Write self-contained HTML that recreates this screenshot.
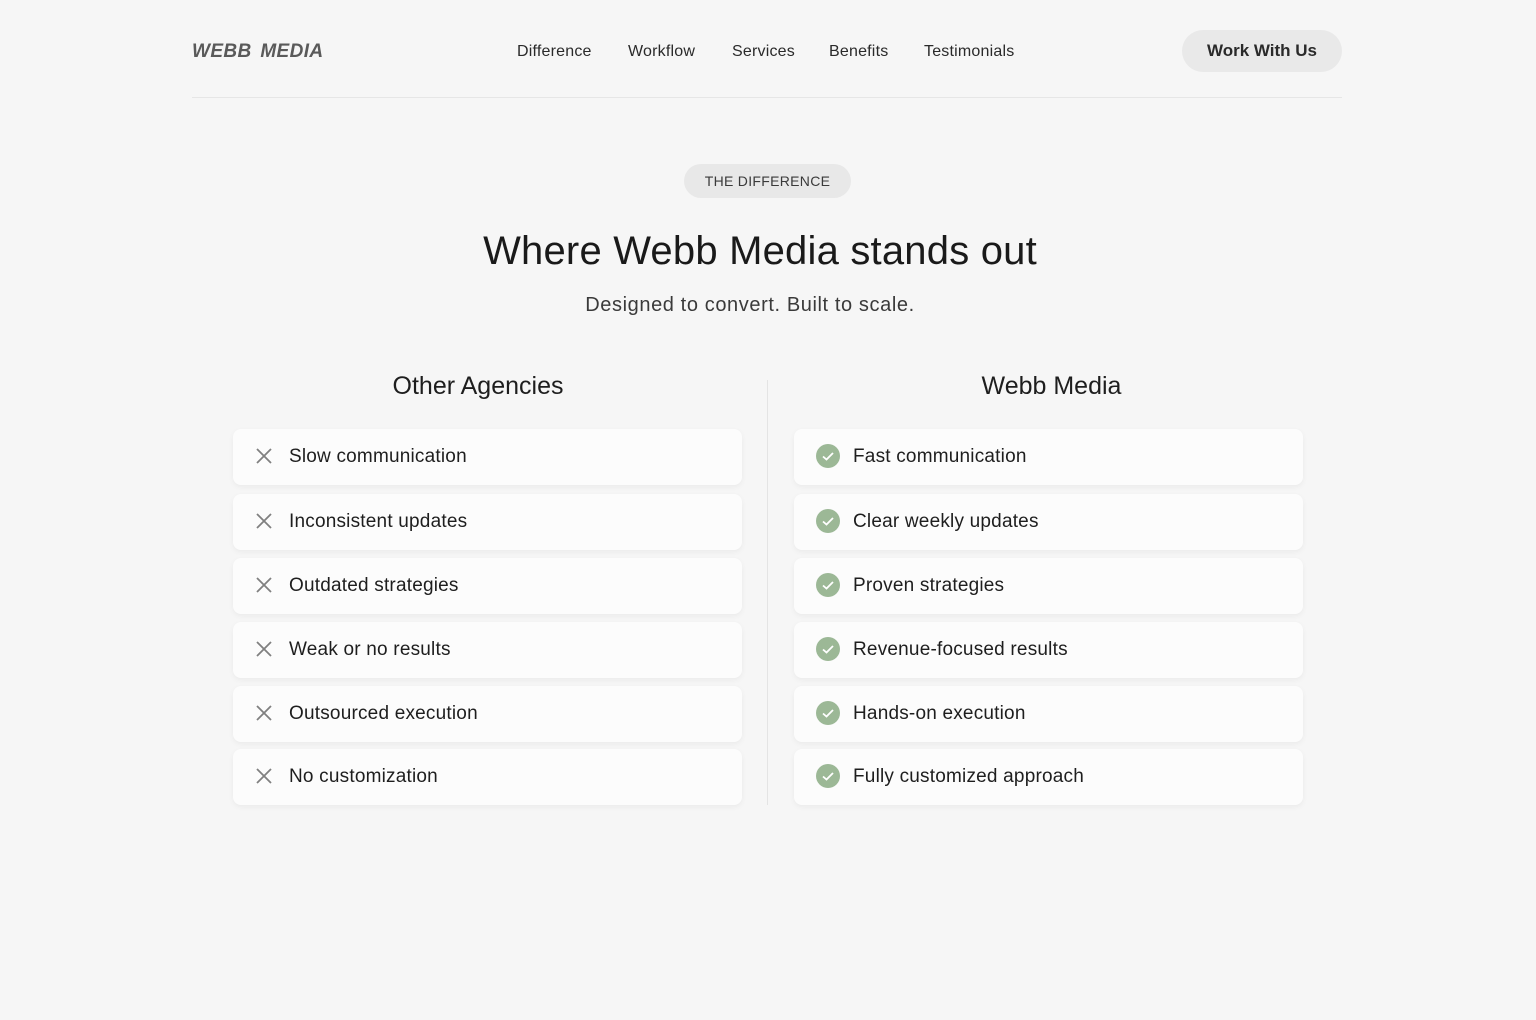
<!DOCTYPE html>
<html><head><meta charset="utf-8"><style>
*{margin:0;padding:0;box-sizing:border-box}
body{width:1536px;height:1020px;background:#f6f6f6;font-family:"Liberation Sans",sans-serif;color:#1e1e1e;position:relative;overflow:hidden}
.a{position:absolute}
.logo{left:192px;top:41px;font-size:19px;font-weight:bold;font-style:italic;color:#5a5a5a;letter-spacing:0.4px;word-spacing:3px}
.nav{top:43px;font-size:16px;color:#2a2a2a;letter-spacing:0.2px}
.btn{left:1182px;top:30px;width:160px;height:42px;border-radius:21px;background:#e9e9e9;font-size:17px;font-weight:bold;color:#2a2a2a;text-align:center;line-height:42px}
.hr{left:192px;top:97px;width:1150px;height:1px;background:#e6e6e6}
.pill{left:684px;top:164px;width:167px;height:34px;border-radius:17px;background:#e8e8e8;font-size:14px;color:#3a3a3a;text-align:center;line-height:34px;letter-spacing:0.3px}
h1{position:absolute;left:0;width:1520px;top:229px;text-align:center;font-size:40px;font-weight:normal;color:#1a1a1a;letter-spacing:0.2px}
.sub{left:0;width:1500px;top:294px;text-align:center;font-size:20px;color:#3a3a3a;letter-spacing:0.6px}
.col{top:372px;font-size:25px;color:#1e1e1e;text-align:center}
.div{left:767px;top:380px;width:1px;height:425px;background:#e4e4e4}
.card{height:56px;width:509px;background:#fcfcfc;border-radius:8px;box-shadow:0 2px 6px rgba(0,0,0,0.05);font-size:19px;display:flex;align-items:center;color:#1e1e1e;letter-spacing:0.2px}
.l{left:233px;padding-left:56px}
.r{left:794px;padding-left:59px}
.ic{position:absolute;left:22px;top:50%;margin-top:-13px}
.l .ic{left:19px}
</style></head><body>
<div class="a logo">WEBB MEDIA</div>
<div class="a nav" style="left:517px">Difference</div>
<div class="a nav" style="left:628px">Workflow</div>
<div class="a nav" style="left:732px">Services</div>
<div class="a nav" style="left:829px">Benefits</div>
<div class="a nav" style="left:924px">Testimonials</div>
<div class="a btn">Work With Us</div>
<div class="a hr"></div>
<div class="a pill">THE DIFFERENCE</div>
<h1>Where Webb Media stands out</h1>
<div class="a sub">Designed to convert. Built to scale.</div>
<div class="a col" style="left:233px;width:490px">Other Agencies</div>
<div class="a col" style="left:794px;width:515px">Webb Media</div>
<div class="a div"></div>

<div class="a card l" style="top:429px"><svg class="ic" width="24" height="24"><path d="M5 5L19 19M19 5L5 19" stroke="#808080" stroke-width="1.8"/></svg>Slow communication</div>
<div class="a card l" style="top:494px"><svg class="ic" width="24" height="24"><path d="M5 5L19 19M19 5L5 19" stroke="#808080" stroke-width="1.8"/></svg>Inconsistent updates</div>
<div class="a card l" style="top:558px"><svg class="ic" width="24" height="24"><path d="M5 5L19 19M19 5L5 19" stroke="#808080" stroke-width="1.8"/></svg>Outdated strategies</div>
<div class="a card l" style="top:622px"><svg class="ic" width="24" height="24"><path d="M5 5L19 19M19 5L5 19" stroke="#808080" stroke-width="1.8"/></svg>Weak or no results</div>
<div class="a card l" style="top:686px"><svg class="ic" width="24" height="24"><path d="M5 5L19 19M19 5L5 19" stroke="#808080" stroke-width="1.8"/></svg>Outsourced execution</div>
<div class="a card l" style="top:749px"><svg class="ic" width="24" height="24"><path d="M5 5L19 19M19 5L5 19" stroke="#808080" stroke-width="1.8"/></svg>No customization</div>

<div class="a card r" style="top:429px"><svg class="ic" width="24" height="24"><circle cx="12" cy="12" r="12" fill="#9cb896"/><path d="M7 12.5L10.5 15.5L17 9" stroke="#fff" stroke-width="1.8" fill="none"/></svg>Fast communication</div>
<div class="a card r" style="top:494px"><svg class="ic" width="24" height="24"><circle cx="12" cy="12" r="12" fill="#9cb896"/><path d="M7 12.5L10.5 15.5L17 9" stroke="#fff" stroke-width="1.8" fill="none"/></svg>Clear weekly updates</div>
<div class="a card r" style="top:558px"><svg class="ic" width="24" height="24"><circle cx="12" cy="12" r="12" fill="#9cb896"/><path d="M7 12.5L10.5 15.5L17 9" stroke="#fff" stroke-width="1.8" fill="none"/></svg>Proven strategies</div>
<div class="a card r" style="top:622px"><svg class="ic" width="24" height="24"><circle cx="12" cy="12" r="12" fill="#9cb896"/><path d="M7 12.5L10.5 15.5L17 9" stroke="#fff" stroke-width="1.8" fill="none"/></svg>Revenue-focused results</div>
<div class="a card r" style="top:686px"><svg class="ic" width="24" height="24"><circle cx="12" cy="12" r="12" fill="#9cb896"/><path d="M7 12.5L10.5 15.5L17 9" stroke="#fff" stroke-width="1.8" fill="none"/></svg>Hands-on execution</div>
<div class="a card r" style="top:749px"><svg class="ic" width="24" height="24"><circle cx="12" cy="12" r="12" fill="#9cb896"/><path d="M7 12.5L10.5 15.5L17 9" stroke="#fff" stroke-width="1.8" fill="none"/></svg>Fully customized approach</div>
</body></html>
